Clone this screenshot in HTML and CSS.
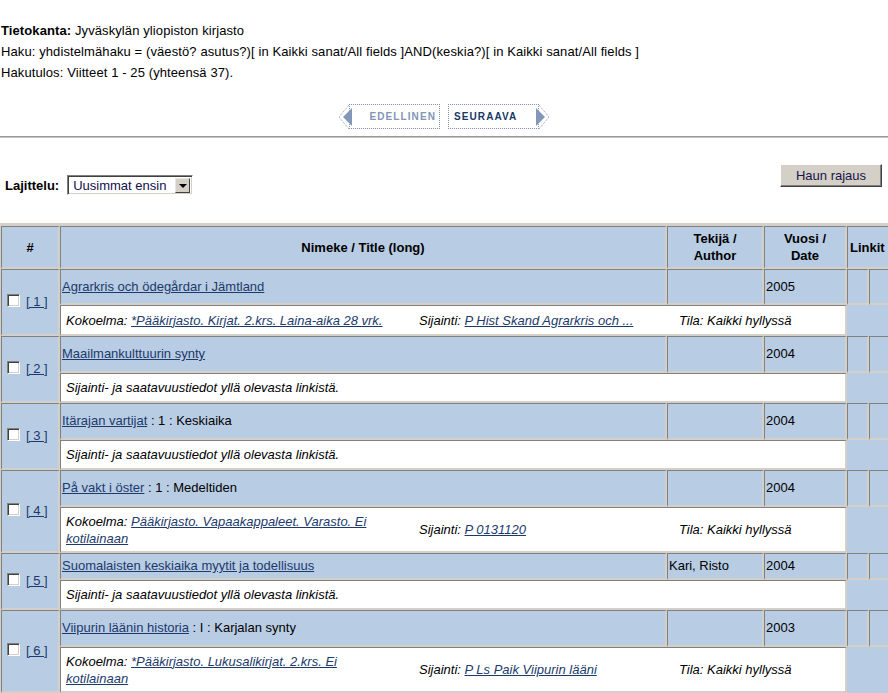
FILE: index.html
```html
<!DOCTYPE html>
<html lang="fi">
<head>
    <meta charset="UTF-8">
    <title>Hakutulos</title>
    <link rel="stylesheet" href="styles.css">
</head>
<body>
    <div class="info">
        <div><b>Tietokanta:</b> Jyväskylän yliopiston kirjasto</div>
        <div>Haku: yhdistelmähaku = (väestö? asutus?)[ in Kaikki sanat/All fields ]AND(keskia?)[ in Kaikki sanat/All fields ]</div>
        <div>Hakutulos: Viitteet 1 - 25 (yhteensä 37).</div>
    </div>

    <div class="pager">
        <a class="page-btn prev" href="#">
            <svg class="arrow arrow-left" width="15" height="26" viewBox="0 0 15 26">
                <path d="M11 1 L1 13 L11 25" fill="none" stroke="#8a9fbe" stroke-width="1" stroke-dasharray="1 1"/>
                <polygon points="5,13 14,4 14,22" fill="#8398b9"/>
            </svg>
            EDELLINEN
        </a>
        <a class="page-btn next" href="#">
            SEURAAVA
            <svg class="arrow arrow-right" width="15" height="26" viewBox="0 0 15 26">
                <path d="M4 1 L14 13 L4 25" fill="none" stroke="#8a9fbe" stroke-width="1" stroke-dasharray="1 1"/>
                <polygon points="10,13 1,4 1,22" fill="#8398b9"/>
            </svg>
        </a>
    </div>

    <div class="rule"></div>

    <div class="sortbar">
        <div class="sort">
            <b>Lajittelu:</b>
            <div class="select">
                <span class="select-value">Uusimmat ensin</span>
                <span class="select-drop"></span>
            </div>
        </div>
        <button class="refine">Haun rajaus</button>
    </div>

    <table class="results">
        <colgroup>
            <col class="c-num">
            <col class="c-title">
            <col class="c-author">
            <col class="c-year">
            <col class="c-link">
            <col class="c-link2">
        </colgroup>
        <tr class="head">
            <th>#</th>
            <th>Nimeke / Title (long)</th>
            <th>Tekijä /<br>Author</th>
            <th>Vuosi /<br>Date</th>
            <th class="links" colspan="2">Linkit</th>
        </tr>

        <tr class="t first">
            <td class="num" rowspan="2"><input type="checkbox"><a href="#">[ 1 ]</a></td>
            <td><a href="#">Agrarkris och ödegårdar i Jämtland</a></td>
            <td></td>
            <td>2005</td>
            <td></td>
            <td></td>
        </tr>
        <tr class="d first">
            <td class="detail" colspan="3">
                <div class="holding">
                    <span class="h-coll">Kokoelma: <a href="#">*Pääkirjasto. Kirjat. 2.krs. Laina-aika 28 vrk.</a></span>
                    <span>Sijainti: <a href="#">P Hist Skand Agrarkris och ...</a></span>
                    <span>Tila: Kaikki hyllyssä</span>
                </div>
            </td>
            <td class="blank" colspan="2"></td>
        </tr>

        <tr class="t">
            <td class="num" rowspan="2"><input type="checkbox"><a href="#">[ 2 ]</a></td>
            <td><a href="#">Maailmankulttuurin synty</a></td>
            <td></td>
            <td>2004</td>
            <td></td>
            <td></td>
        </tr>
        <tr class="d">
            <td class="detail" colspan="3"><div class="note">Sijainti- ja saatavuustiedot yllä olevasta linkistä.</div></td>
            <td class="blank" colspan="2"></td>
        </tr>

        <tr class="t">
            <td class="num" rowspan="2"><input type="checkbox"><a href="#">[ 3 ]</a></td>
            <td><a href="#">Itärajan vartijat</a> : 1 : Keskiaika</td>
            <td></td>
            <td>2004</td>
            <td></td>
            <td></td>
        </tr>
        <tr class="d">
            <td class="detail" colspan="3"><div class="note">Sijainti- ja saatavuustiedot yllä olevasta linkistä.</div></td>
            <td class="blank" colspan="2"></td>
        </tr>

        <tr class="t">
            <td class="num" rowspan="2"><input type="checkbox"><a href="#">[ 4 ]</a></td>
            <td><a href="#">På vakt i öster</a> : 1 : Medeltiden</td>
            <td></td>
            <td>2004</td>
            <td></td>
            <td></td>
        </tr>
        <tr class="d two">
            <td class="detail" colspan="3">
                <div class="holding">
                    <span class="h-coll">Kokoelma: <a href="#">Pääkirjasto. Vapaakappaleet. Varasto. Ei kotilainaan</a></span>
                    <span>Sijainti: <a href="#">P 0131120</a></span>
                    <span>Tila: Kaikki hyllyssä</span>
                </div>
            </td>
            <td class="blank" colspan="2"></td>
        </tr>

        <tr class="t short">
            <td class="num" rowspan="2"><input type="checkbox"><a href="#">[ 5 ]</a></td>
            <td><a href="#">Suomalaisten keskiaika myytit ja todellisuus</a></td>
            <td>Kari, Risto</td>
            <td>2004</td>
            <td></td>
            <td></td>
        </tr>
        <tr class="d">
            <td class="detail" colspan="3"><div class="note">Sijainti- ja saatavuustiedot yllä olevasta linkistä.</div></td>
            <td class="blank" colspan="2"></td>
        </tr>

        <tr class="t">
            <td class="num" rowspan="2"><input type="checkbox"><a href="#">[ 6 ]</a></td>
            <td><a href="#">Viipurin läänin historia</a> : I : Karjalan synty</td>
            <td></td>
            <td>2003</td>
            <td></td>
            <td></td>
        </tr>
        <tr class="d two">
            <td class="detail" colspan="3">
                <div class="holding">
                    <span class="h-coll">Kokoelma: <a href="#">*Pääkirjasto. Lukusalikirjat. 2.krs. Ei kotilainaan</a></span>
                    <span>Sijainti: <a href="#">P Ls Paik Viipurin lääni</a></span>
                    <span>Tila: Kaikki hyllyssä</span>
                </div>
            </td>
            <td class="blank" colspan="2"></td>
        </tr>
    </table>
</body>
</html>
```

FILE: styles.css
```css
* {
    box-sizing: border-box;
}

html {
    overflow: hidden;
}

body {
    margin: 0;
    font-family: "Liberation Sans", Arial, sans-serif;
    font-size: 13px;
    color: #000;
    background: #fff;
}

a {
    color: #1c3a6b;
}

/* search info */
.info {
    padding: 20px 0 0 1px;
    line-height: 21px;
    letter-spacing: 0.1px;
}

/* previous / next */
.pager {
    display: flex;
    justify-content: center;
    gap: 8px;
    margin-top: 21px;
}

.page-btn {
    position: relative;
    display: flex;
    align-items: center;
    width: 91px;
    height: 25px;
    border: 1px dotted #7f95b5;
    font-size: 10px;
    font-weight: bold;
    letter-spacing: 1.1px;
    text-decoration: none;
}

.prev {
    justify-content: flex-end;
    padding-right: 3px;
    color: #8196b6;
}

.next {
    padding-left: 5px;
    color: #173766;
}

.arrow {
    position: absolute;
    top: -1px;
}

.arrow-left {
    left: -12px;
}

.arrow-right {
    right: -12px;
}

.rule {
    margin-top: 7px;
    height: 2px;
    border-top: 1px solid #9a9a9a;
    border-bottom: 1px solid #c4c4c4;
}

/* sorting */
.sortbar {
    display: flex;
    justify-content: space-between;
    align-items: flex-start;
    padding: 0 6px 28px 5px;
}

.sort {
    display: flex;
    align-items: center;
    gap: 8px;
    margin-top: 37px;
}

.select {
    display: flex;
    align-items: center;
    width: 126px;
    height: 20px;
    background: #fff;
    border: 1px solid;
    border-color: #808080 #fff #fff #808080;
    box-shadow: inset 1px 1px #404040, inset -1px -1px #d4d0c8;
    padding: 2px;
}

.select-value {
    flex: 1;
    padding-left: 3px;
    color: #10104a;
}

.select-drop {
    position: relative;
    width: 15px;
    height: 15px;
    background: #d4d0c8;
    border: 1px solid;
    border-color: #e8e6e2 #404040 #404040 #e8e6e2;
}

.select-drop::after {
    content: "";
    position: absolute;
    left: 3px;
    top: 5px;
    border-left: 4px solid transparent;
    border-right: 4px solid transparent;
    border-top: 4px solid #000;
}

.refine {
    margin-top: 26px;
    width: 102px;
    height: 23px;
    font-family: "Liberation Sans", Arial, sans-serif;
    font-size: 13px;
    color: #14144a;
    background: #d4d0c8;
    border: 1px solid;
    border-color: #fff #404040 #404040 #fff;
    box-shadow: inset -1px -1px #808080;
    padding: 0;
}

/* results */
.results {
    width: 890px;
    table-layout: fixed;
    border-collapse: separate;
    border-spacing: 0;
    border-top: 3px solid #d4d0c8;
    border-left: 1px solid #d4d0c8;
    background: #d4d0c8;
}

.c-num { width: 59px; }
.c-title { width: 607px; }
.c-author { width: 97px; }
.c-year { width: 83px; }
.c-link { width: 22px; }
.c-link2 { width: 22px; }

.results th,
.results td {
    border-style: solid;
    border-width: 1px 2px 2px 1px;
    border-color: #808080 #d4d0c8 #d4d0c8 #808080;
    background: #b8cce4;
    padding: 0 1px;
    vertical-align: middle;
    line-height: 16px;
    white-space: nowrap;
}

.results th {
    font-weight: bold;
    text-align: center;
    line-height: 17px;
}

.results th.links {
    text-align: left;
    padding-left: 2px;
}

.head { height: 43px; }
.t { height: 37px; }
.t.first { height: 36px; }
.t.short { height: 27px; }
.d { height: 30px; }
.d.first { height: 31px; }
.d.two { height: 46px; }

.results td.num {
    padding-left: 5px;
}

.num input {
    appearance: none;
    -webkit-appearance: none;
    width: 13px;
    height: 13px;
    margin: 0 6px 0 0;
    vertical-align: -1px;
    background: #fff;
    border: 1px solid;
    border-color: #808080 #fff #fff #808080;
    box-shadow: inset 1px 1px #404040, inset -1px -1px #d4d0c8;
}

.results td.detail {
    background: #fff;
    padding: 0 0 0 5px;
    font-style: italic;
    line-height: 17px;
    white-space: normal;
}

.results td.blank {
    border: 0;
}

.holding {
    display: grid;
    grid-template-columns: 353px 260px 1fr;
    align-items: center;
}

.h-coll {
    padding-right: 19px;
}
```
